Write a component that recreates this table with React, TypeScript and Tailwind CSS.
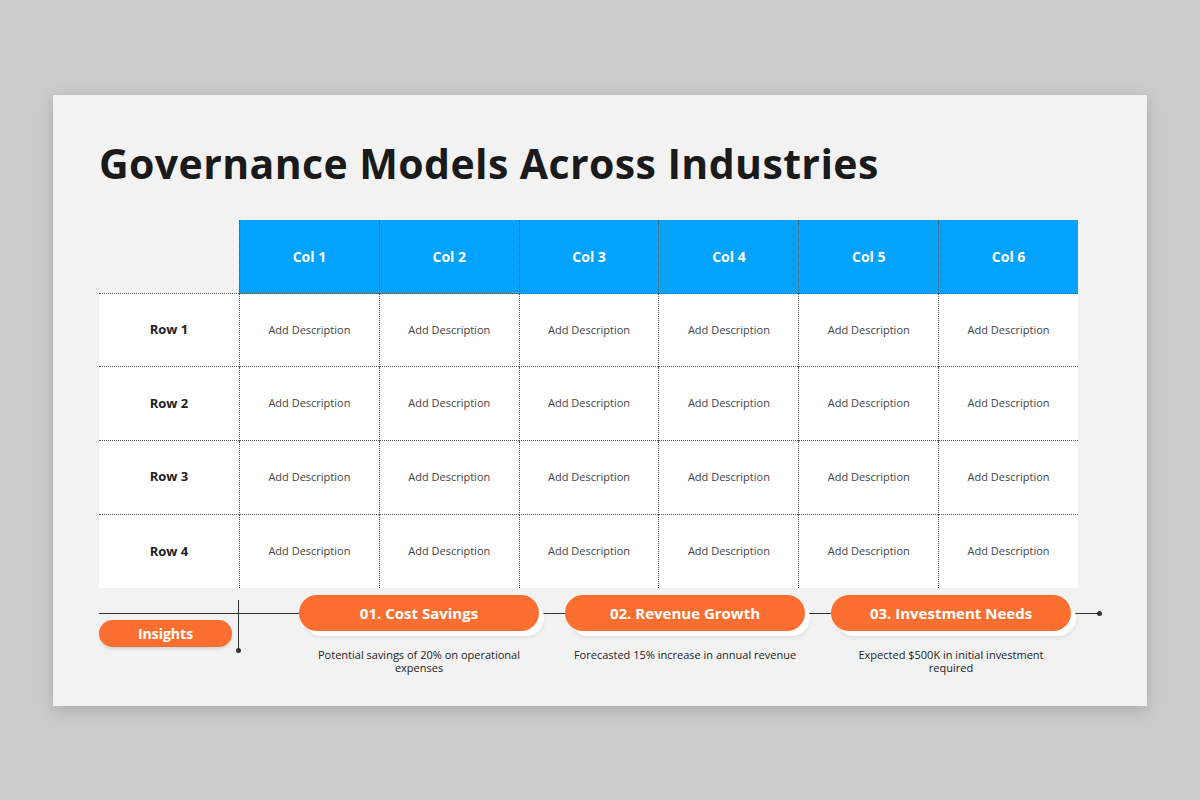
const cols = ['Col 1', 'Col 2', 'Col 3', 'Col 4', 'Col 5', 'Col 6']
const rows = ['Row 1', 'Row 2', 'Row 3', 'Row 4']

const insights = [
  { title: '01. Cost Savings', text: 'Potential savings of 20% on operational expenses' },
  { title: '02. Revenue Growth', text: 'Forecasted 15% increase in annual revenue' },
  { title: '03. Investment Needs', text: 'Expected $500K in initial investment required' },
]

function Pill({ title }: { title: string }) {
  return (
    <div className="relative h-[36px] w-[240px]">
      <div className="absolute left-[5px] top-[5px] h-[36px] w-[240px] rounded-full bg-white shadow-[0_2px_4px_rgba(0,0,0,0.08)]" />
      <div className="relative flex h-[36px] w-[240px] items-center justify-center rounded-full bg-[#fd6f30] text-[15px] font-bold text-white">
        {title}
      </div>
    </div>
  )
}

export default function App() {
  return (
    <div
      className="flex h-[800px] w-[1200px] items-center justify-center bg-[#cccccc]"
      style={{ fontFamily: '"Open Sans", "Noto Sans", sans-serif' }}
    >
      <div className="h-[611px] w-[1094px] bg-[#f2f2f2] pl-[46px] pt-[42px] shadow-[0_4px_14px_rgba(0,0,0,0.18)]">
        <h1 className="text-[41px] font-bold leading-[52px] tracking-[0.4px] text-[#1a1a1a]">
          Governance Models Across Industries
        </h1>

        <div className="mt-[31px] grid w-[979px] grid-cols-[140px_repeat(6,1fr)]">
          <div className="h-[74px] border-b border-dotted border-[#555]" />
          {cols.map((c) => (
            <div
              key={c}
              className="flex h-[74px] items-center justify-center border-b border-l border-dotted border-[#555] bg-[#03a3fd] text-[14px] font-bold text-white"
            >
              {c}
            </div>
          ))}
          {rows.map((r, ri) => (
            <div key={r} className="contents">
              <div
                className={`flex h-[73.7px] items-center justify-center bg-white text-[13px] font-bold text-[#222] ${ri < 3 ? 'border-b border-dotted border-[#555]' : ''}`}
              >
                {r}
              </div>
              {cols.map((c) => (
                <div
                  key={c}
                  className={`flex h-[73.7px] items-center justify-center border-l border-dotted border-[#555] bg-white text-[11px] text-[#444] ${ri < 3 ? 'border-b' : ''}`}
                >
                  Add Description
                </div>
              ))}
            </div>
          ))}
        </div>

        <div className="relative flex h-[100px] w-[1010px]">
          {/* timeline lines */}
          <div className="absolute left-0 top-[25px] h-px w-[1001px] bg-[#333]" />
          <div className="absolute left-[998px] top-[23px] h-[5px] w-[5px] rounded-full bg-[#333]" />
          <div className="absolute left-[139px] top-[12px] h-[50px] w-px bg-[#333]" />
          <div className="absolute left-[137px] top-[60px] h-[5px] w-[5px] rounded-full bg-[#333]" />

          <div className="relative w-[200px] pt-[32px]">
            <div className="flex h-[27px] w-[133px] items-center justify-center rounded-full bg-[#fd6f30] text-[14px] font-bold text-white shadow-[0_2px_3px_rgba(0,0,0,0.12)]">
              Insights
            </div>
          </div>
          {insights.map((it, i) => (
            <div key={it.title} className={`relative flex w-[240px] flex-col items-center pt-[7px] ${i > 0 ? 'ml-[26px]' : ''}`}>
              <Pill title={it.title} />
              <p className="mt-[17px] w-[230px] text-center text-[11px] leading-[13px] text-[#222]">{it.text}</p>
            </div>
          ))}
        </div>
      </div>
    </div>
  )
}
